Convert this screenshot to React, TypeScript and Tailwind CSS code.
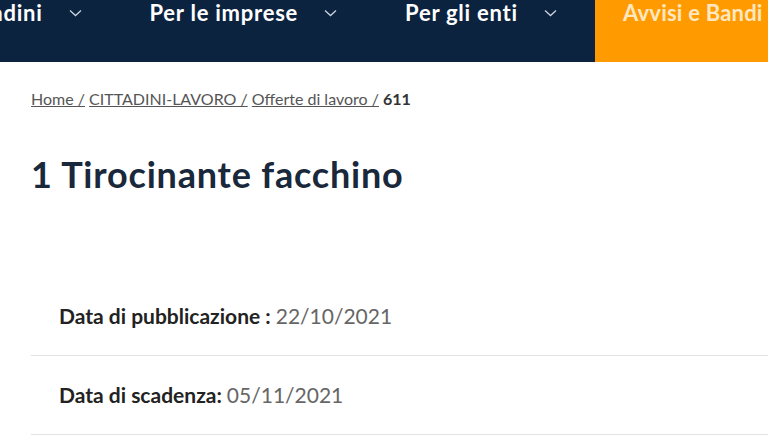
import * as React from "react"

const font = { fontFamily: "Lato, 'Noto Sans', sans-serif" }

function Chevron() {
  return (
    <svg width="13" height="8" viewBox="0 0 13 8" fill="none" className="shrink-0">
      <path d="M1 1.5 L6.5 6.5 L12 1.5" stroke="#c9d3de" strokeWidth="1.3" />
    </svg>
  )
}

const navItems = ["Cittadini", "Per le imprese", "Per gli enti"]

const details = [
  { label: "Data di pubblicazione :", value: "22/10/2021" },
  { label: "Data di scadenza:", value: "05/11/2021" },
]

export default function App() {
  return (
    <div className="w-[768px] h-[448px] overflow-hidden bg-white" style={font}>
      {/* Top navigation */}
      <nav className="h-[62px] bg-[#0c2340] flex overflow-hidden">
        <div className="flex-1 min-w-0 flex items-start pt-[1px] ml-[-48px] gap-[68px]">
          {navItems.map((item) => (
            <div key={item} className="flex items-center gap-[26px] shrink-0">
              <span className="text-[22px] leading-[24px] font-bold tracking-[0.75px] text-white">{item}</span>
              <Chevron />
            </div>
          ))}
        </div>
        <div className="w-[173px] shrink-0 bg-[#ff9a00] pl-[28px] pt-[1px]">
          <span className="text-[22px] leading-[24px] font-bold tracking-[0.2px] text-[#ffe8c0] whitespace-nowrap">
            Avvisi e Bandi
          </span>
        </div>
      </nav>

      <div className="pl-[31px]">
        {/* Breadcrumb */}
        <div className="pt-[27px] text-[16px] leading-[20px] text-[#555]">
          <a className="underline">Home /</a>{" "}
          <a className="underline">CITTADINI-LAVORO /</a>{" "}
          <a className="underline">Offerte di lavoro /</a>{" "}
          <span className="font-bold text-[#333]">611</span>
        </div>

        {/* Title */}
        <h1 className="mt-[45px] text-[36px] leading-[40px] font-bold tracking-[0.8px] text-[#19283a]">
          1 Tirocinante facchino
        </h1>

        {/* Details */}
        <div className="mt-[83px]">
          {details.map((d) => (
            <div key={d.label} className="h-[79px] border-b border-[#e3e3e3] flex items-center pl-[28px]">
              <span className="text-[21px] font-bold text-[#222]">{d.label}</span>
              <span className="text-[21px] text-[#666] ml-[5px]">{d.value}</span>
            </div>
          ))}
        </div>
      </div>
    </div>
  )
}
